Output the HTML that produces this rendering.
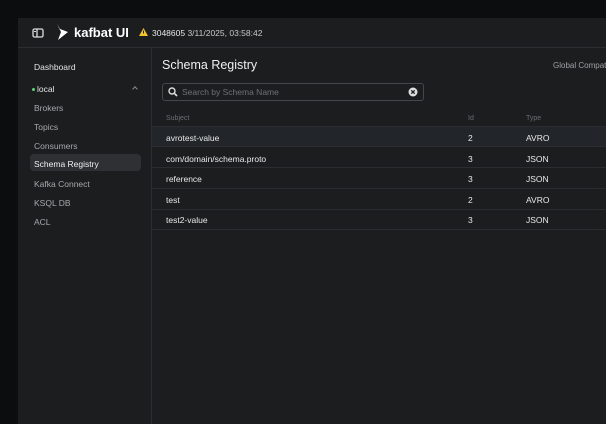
<!DOCTYPE html>
<html><head><meta charset="utf-8"><style>
*{box-sizing:border-box;margin:0;padding:0}
body{width:606px;height:424px;overflow:hidden;background:#0c0d0f;font-family:"Liberation Sans",sans-serif;position:relative}
.app{position:absolute;left:18px;top:18px;right:0;bottom:0;background:#1c1d1f}
.hdr{position:absolute;left:0;top:0;right:0;height:30px;border-bottom:1px solid #2c2d30;background:#1c1d1f}
.side{position:absolute;left:0;top:30px;width:134px;bottom:0;border-right:1px solid #2c2d30}
.main{position:absolute;left:134px;top:30px;right:0;bottom:0;background:#1b1d1f}
.nav{position:absolute;left:16px;font-size:8.5px;color:#a6a8ab}
.t{position:absolute;font-size:8.5px;color:#e8e9ea}
.row{position:absolute;left:0;right:0;height:21px;border-bottom:1px solid #2a2c2f}
</style></head><body>
<div class="app">
 <div class="hdr">
  <svg style="position:absolute;left:14px;top:10px" width="12" height="10" viewBox="0 0 12 10"><rect x="1" y="1" width="10" height="8" rx="1.5" fill="none" stroke="#ddd" stroke-width="1.3"/><line x1="5" y1="1" x2="5" y2="9" stroke="#ddd" stroke-width="1.3"/><rect x="2" y="3" width="2" height="1" fill="#ddd"/></svg>
  <svg style="position:absolute;left:38px;top:6px" width="12" height="16" viewBox="0 0 12 16"><path d="M1 0 L4 5 L12 8 L2 16 L5 8 Z" fill="#fff"/></svg>
  <div style="position:absolute;left:56px;top:7px;font-size:13px;font-weight:bold;color:#fff">kafbat UI</div>
  <svg style="position:absolute;left:121px;top:10px" width="9" height="8" viewBox="0 0 9 8"><path d="M4.5 0 L9 8 L0 8Z" fill="#f2c230"/><rect x="4" y="2.5" width="1" height="3" fill="#222"/></svg>
  <div style="position:absolute;left:134px;top:10px;font-size:8.5px;color:#c8c9cb"><span style="color:#e6e6e6">3048605</span> 3/11/2025, 03:58:42</div>
 </div>
 <div class="side">
  <div class="nav" style="top:14px;color:#e4e5e6">Dashboard</div>
  <div style="position:absolute;left:14px;top:40px;width:3px;height:3px;border-radius:50%;background:#5fd07a"></div>
  <div class="nav" style="left:19px;top:36px;color:#e4e5e6">local</div>
  <div style="position:absolute;left:115px;top:39px;width:4px;height:4px;border-left:1px solid #888;border-top:1px solid #888;transform:rotate(45deg)"></div>
  <div class="nav" style="top:55px">Brokers</div>
  <div class="nav" style="top:74px">Topics</div>
  <div class="nav" style="top:93px">Consumers</div>
  <div style="position:absolute;left:12px;top:106px;width:111px;height:17px;border-radius:4px;background:#2f3033"></div>
  <div class="nav" style="top:111px;color:#f0f0f0">Schema Registry</div>
  <div class="nav" style="top:131px">Kafka Connect</div>
  <div class="nav" style="top:150px">KSQL DB</div>
  <div class="nav" style="top:169px">ACL</div>
 </div>
 <div class="main">
  <div style="position:absolute;left:10px;top:10px;font-size:12.5px;color:#f0f0f0">Schema Registry</div>
  <div style="position:absolute;left:401px;top:13px;font-size:8px;color:#9fa1a4;white-space:nowrap">Global Compatibility</div>
  <div style="position:absolute;left:10px;top:35px;width:262px;height:18px;border:1px solid #45474b;border-radius:3px"></div>
  <svg style="position:absolute;left:16px;top:39px" width="10" height="10" viewBox="0 0 10 10"><circle cx="4" cy="4" r="3" fill="none" stroke="#ddd" stroke-width="1.4"/><line x1="6.2" y1="6.2" x2="9" y2="9" stroke="#ddd" stroke-width="1.6"/></svg>
  <div style="position:absolute;left:30px;top:39px;font-size:8.5px;color:#6f7276">Search by Schema Name</div>
  <svg style="position:absolute;left:256px;top:39px" width="10" height="10" viewBox="0 0 10 10"><circle cx="5" cy="5" r="4.5" fill="#ddd"/><path d="M3.3 3.3L6.7 6.7M6.7 3.3L3.3 6.7" stroke="#1b1d1f" stroke-width="1.3"/></svg>
  <div style="position:absolute;left:14px;top:67px;font-size:7px;color:#6b6e72">Subject</div>
  <div style="position:absolute;left:316px;top:67px;font-size:7px;color:#6b6e72">Id</div>
  <div style="position:absolute;left:374px;top:67px;font-size:7px;color:#6b6e72">Type</div>
  <div class="row" style="top:78px;background:#22262a;border-top:1px solid #2a2c2f"></div>
  <div class="row" style="top:99px"></div>
  <div class="row" style="top:120px"></div>
  <div class="row" style="top:141px"></div>
  <div class="row" style="top:161px"></div>
  <div class="t" style="left:14px;top:85px">avrotest-value</div><div class="t" style="left:316px;top:85px">2</div><div class="t" style="left:374px;top:85px">AVRO</div>
  <div class="t" style="left:14px;top:106px">com/domain/schema.proto</div><div class="t" style="left:316px;top:106px">3</div><div class="t" style="left:374px;top:106px">JSON</div>
  <div class="t" style="left:14px;top:126px">reference</div><div class="t" style="left:316px;top:126px">3</div><div class="t" style="left:374px;top:126px">JSON</div>
  <div class="t" style="left:14px;top:147px">test</div><div class="t" style="left:316px;top:147px">2</div><div class="t" style="left:374px;top:147px">AVRO</div>
  <div class="t" style="left:14px;top:167px">test2-value</div><div class="t" style="left:316px;top:167px">3</div><div class="t" style="left:374px;top:167px">JSON</div>
 </div>
</div>
</body></html>
